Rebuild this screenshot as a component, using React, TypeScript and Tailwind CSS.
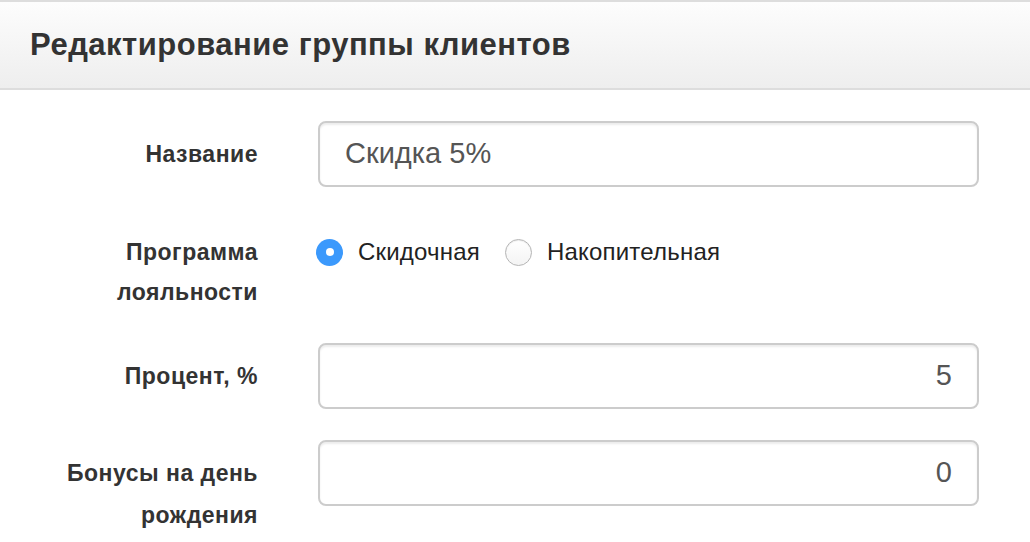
import React from "react";

const font = { fontFamily: '"Liberation Sans", Arial, Helvetica, sans-serif' };

function Field({ value, right }: { value: string; right?: boolean }) {
  return (
    <div
      className={`flex h-[66px] w-[661px] items-center rounded-[8px] border-2 border-[#cccccc] bg-white px-[25px] text-[29px] text-[#555555] shadow-[inset_0_2px_2px_rgba(0,0,0,0.075)] ${
        right ? "justify-end" : "justify-start"
      }`}
    >
      {value}
    </div>
  );
}

function Label({ children }: { children: React.ReactNode }) {
  return (
    <div className="w-[258px] shrink-0 pt-[12px] text-right text-[23px] font-bold leading-[42px] tracking-[0.5px] text-[#333333]">
      {children}
    </div>
  );
}

export default function App() {
  return (
    <div className="h-[542px] w-[1030px] overflow-hidden bg-white" style={font}>
      <div className="flex h-[90px] items-center border-y-2 border-[#dddddd] bg-gradient-to-b from-[#fdfdfd] to-[#eeeeee] pl-[30px]">
        <h4 className="text-[31px] font-bold tracking-[0.5px] text-[#333333]">Редактирование группы клиентов</h4>
      </div>

      <div className="mt-[31px] flex items-start">
        <Label>Название</Label>
        <div className="ml-[60px]">
          <Field value="Скидка 5%" />
        </div>
      </div>

      <div className="mt-[45px] flex items-start">
        <div className="w-[258px] shrink-0 text-right text-[23px] font-bold leading-[40px] tracking-[0.5px] text-[#333333]">
          Программа
          <br />
          лояльности
        </div>
        <div className="ml-[58px] flex h-[40px] items-center text-[24px] tracking-[0.2px] text-[#222222]">
          <span className="flex h-[27px] w-[27px] items-center justify-center rounded-full bg-[#3b99fc]">
            <span className="h-[8px] w-[8px] rounded-full bg-white" />
          </span>
          <span className="ml-[15px]">Скидочная</span>
          <span className="ml-[25px] h-[27px] w-[27px] rounded-full border border-[#b5b5b5] bg-gradient-to-b from-white to-[#f4f4f4] shadow-[inset_0_1px_1px_rgba(0,0,0,0.08)]" />
          <span className="ml-[15px]">Накопительная</span>
        </div>
      </div>

      <div className="mt-[31px] flex items-start">
        <Label>Процент, %</Label>
        <div className="ml-[60px]">
          <Field value="5" right />
        </div>
      </div>

      <div className="mt-[31px] flex items-start">
        <Label>
          Бонусы на день
          <br />
          рождения
        </Label>
        <div className="ml-[60px]">
          <Field value="0" right />
        </div>
      </div>
    </div>
  );
}
